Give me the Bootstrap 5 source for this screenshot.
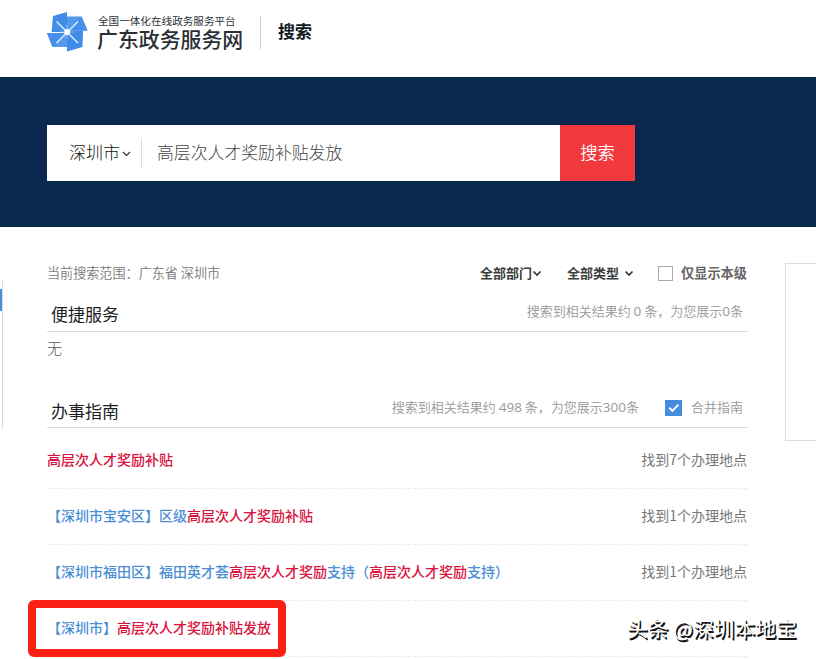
<!DOCTYPE html>
<html lang="zh-CN">
<head>
<meta charset="utf-8">
<title>广东政务服务网 - 搜索</title>
<link href="https://cdn.jsdelivr.net/npm/bootstrap@5.3.0/dist/css/bootstrap.min.css" rel="stylesheet">
<style>
body{font-family:"Noto Sans CJK SC",sans-serif;font-size:13px;line-height:20px;color:#777;width:816px;height:659px;overflow:hidden;background:#fff}
svg{display:block;flex:none}
.latin{font-family:"Open Sans","Noto Sans",sans-serif;font-weight:400;font-size:13.5px}
.site-head{height:77px;padding-left:47px}
.brand-mark{margin-top:-13px}
.brand-text{margin-left:9px;margin-top:-14px;color:#2a3036;width:147px}
.brand-sub{font-size:10.6px;line-height:14px;font-weight:400;padding-left:1px}
.brand-name{font-size:20.9px;line-height:21px;font-weight:500;white-space:nowrap}
.head-rule{width:1px;height:33px;background:#c9cccf;margin:-13px 17px 0 16px}
.head-title{font-size:17px;font-weight:700;color:#111a24;margin-top:-16px}
.hero{height:150px;background:#0a284e;padding:48px 0 0 47px}
.search-box{width:588px;height:56px;background:#fff;font-size:17px;font-weight:300}
.city{width:94px;padding:0 0 2px 22px;color:#111}
.city svg{margin:3px 0 0 2px}
.box-rule{width:1px;height:30px;background:#dcdcdc}
.query{padding:0 0 2px 15px;color:#444;font-size:16.85px}
.go{width:75px;background:#f23a3e;color:#fff;border:0;border-radius:0;font-size:17.3px;font-weight:350}
.go span{display:block;padding-bottom:2px}
.side-left{width:3px;height:148px;margin-top:54px;border-right:1px solid #d6dade;padding-top:8px}
.side-left div{width:2px;height:22px;background:#4a8de0}
.side-right{width:40px;height:178px;margin:36px 0 0 38px;border:1px solid #dadcde;border-right:0}
.main-col{width:700px;margin-left:44px;padding-top:36px}
.filters{height:20px}
.filters b{color:#3c3c3c;line-height:18px;padding-bottom:1px}
.scope{font-size:13.1px;font-weight:350;padding-bottom:1px}
.tick-box{width:15px;height:15px;border:1px solid #aaa}
.sect{height:49px;border-bottom:1px solid #d8dcdf;padding:0 4px}
.sect h2{font-size:17px;line-height:24px;font-weight:400;color:#1b1f23;margin:19px 0 0}
.count{color:#999;font-weight:350;white-space:pre;margin-top:18px}
.none{font-size:15px;font-weight:300;height:47px;line-height:32px;color:#555}
.result{height:56px;border-bottom:1px dashed #ebebeb;font-size:14px;line-height:52px;white-space:nowrap}
.result a{color:#4a8fd6;font-weight:500;text-decoration:none}
.result em{color:#d81440;font-style:normal}
.marker{left:28px;top:600px;width:258px;height:57px;border:8px solid #fb2015;border-radius:6px}
.stamp{left:627px;top:614px;font-size:20.8px;line-height:28px;color:#fff;font-weight:400;white-space:nowrap;text-shadow:1.5px 1.5px 0 #111,1px 1px 0 #222}
</style>
<script src="https://cdn.jsdelivr.net/npm/bootstrap@5.3.0/dist/js/bootstrap.bundle.min.js"></script>
</head>
<body class="position-relative">
<header class="site-head d-flex align-items-center">
  <svg class="brand-mark" width="41" height="40" viewBox="0 0 41 40">
    <path d="M6 4L20 0v20H4.500z" fill="#3f8ce9"/>
    <path d="M20 4.500h14.500L40.500 18.500H20z" fill="#5598ee"/>
    <path d="M20 18.500h16L35.500 35 20 39.500z" fill="#3f8ce9"/>
    <path d="M0 21h20v14H5.500z" fill="#5598ee"/>
    <path d="M20 18.500L34.500 4.500l6 14zM20 21L5.500 35 0 21z" fill="#468fea"/>
    <path d="M9.500 9.500L31 31M31 9.500L9.500 31" stroke="#d9ebff" stroke-width="1.600"/>
    <path d="M20 13v14M13 20h14" stroke="#9cc8fa" stroke-width=".8"/>
    <circle cx="20.200" cy="20" r="3" fill="#fff"/>
  </svg>
  <div class="brand-text">
    <div class="brand-sub text-nowrap">全国一体化在线政务服务平台</div>
    <div class="brand-name">广东政务服务网</div>
  </div>
  <div class="head-rule"></div>
  <div class="head-title">搜索</div>
</header>
<section class="hero">
  <div class="search-box d-flex align-items-center">
    <div class="city d-flex align-items-center text-nowrap">深圳市<svg width="9" height="6" viewBox="0 0 9 6" fill="none" stroke="#333" stroke-width="1.200"><path d="M1 1l3.500 3.500L8 1"/></svg></div>
    <div class="box-rule"></div>
    <div class="query flex-grow-1">高层次人才奖励补贴发放</div>
    <button class="go h-100 p-0"><span>搜索</span></button>
  </div>
</section>
<main class="d-flex align-items-start">
  <aside class="side-left"><div></div></aside>
  <div class="main-col flex-shrink-0">
    <div class="filters d-flex align-items-center">
      <span class="scope me-auto text-nowrap">当前搜索范围：广东省 深圳市</span>
      <b>全部部门</b><svg width="10" height="7" viewBox="0 0 10 7" fill="none" stroke="#333" stroke-width="1.700"><path d="M1.500 1.500L5 5l3.500-3.500"/></svg>
      <b style="margin-left:25px">全部类型</b><svg style="margin-left:5px" width="10" height="7" viewBox="0 0 10 7" fill="none" stroke="#333" stroke-width="1.700"><path d="M1.500 1.500L5 5l3.500-3.500"/></svg>
      <span class="tick-box" style="margin:0 8px 0 24px"></span><b style="color:#666;font-size:13.2px">仅显示本级</b>
    </div>
    <div class="sect d-flex justify-content-between">
      <h2>便捷服务</h2>
      <span class="count">搜索到相关结果约 <span class="latin">0</span> 条，为您展示<span class="latin">0</span>条</span>
    </div>
    <div class="none">无</div>
    <div class="sect d-flex">
      <h2 class="me-auto" style="margin-top:20px">办事指南</h2>
      <span class="count">搜索到相关结果约 <span class="latin">498</span> 条，为您展示<span class="latin">300</span>条</span>
      <svg style="margin:21px 9px 0 26px" width="17" height="16" viewBox="0 0 17 16"><path d="M0 0h17v16H0z" fill="#438ce0"/><path d="M4.200 7.600l3.200 3.300 6-6.300" fill="none" stroke="#fff" stroke-width="2"/></svg>
      <span class="count">合并指南</span>
    </div>
    <div style="height:5px"></div>
    <div class="result d-flex justify-content-between"><a href="#"><em>高层次人才奖励补贴</em></a><span>找到7个办理地点</span></div>
    <div class="result d-flex justify-content-between"><a href="#">【深圳市宝安区】区级<em>高层次人才奖励补贴</em></a><span>找到1个办理地点</span></div>
    <div class="result d-flex justify-content-between"><a href="#">【深圳市福田区】福田英才荟<em>高层次人才奖励</em>支持（<em>高层次人才奖励</em>支持）</a><span>找到1个办理地点</span></div>
    <div class="result d-flex justify-content-between"><a href="#">【深圳市】<em>高层次人才奖励补贴发放</em></a></div>
  </div>
  <aside class="side-right"></aside>
</main>
<div class="marker position-absolute"></div>
<div class="stamp position-absolute">头条 @深圳本地宝</div>
</body>
</html>
